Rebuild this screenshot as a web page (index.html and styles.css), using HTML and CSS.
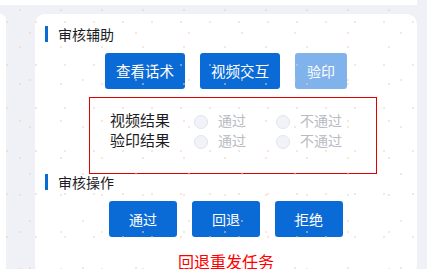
FILE: index.html
```html
<!DOCTYPE html>
<html lang="zh-CN">
<head>
<meta charset="utf-8">
<link rel="stylesheet" href="styles.css">
</head>
<body>
<div class="page">
  <div class="top-strip"></div>
  <div class="main-row">
    <div class="side-card"></div>
    <div class="card">
      <div class="section-title"><span class="bar"></span><span>审核辅助</span></div>
      <div class="btn-row first">
        <button class="btn wide">查看话术</button>
        <button class="btn wide">视频交互</button>
        <button class="btn light">验印</button>
      </div>
      <div class="result-box">
        <div class="result-row">
          <span class="label">视频结果</span>
          <span class="option"><span class="radio"></span>通过</span>
          <span class="option"><span class="radio"></span>不通过</span>
        </div>
        <div class="result-row">
          <span class="label">验印结果</span>
          <span class="option"><span class="radio"></span>通过</span>
          <span class="option"><span class="radio"></span>不通过</span>
        </div>
      </div>
      <div class="section-title second"><span class="bar"></span><span>审核操作</span></div>
      <div class="btn-row">
        <button class="btn narrow">通过</button>
        <button class="btn narrow">回退</button>
        <button class="btn narrow">拒绝</button>
      </div>
      <div class="notice">回退重发任务</div>
    </div>
  </div>
  <div class="dots"></div>
</div>
</body>
</html>
```

FILE: styles.css
```css
html, body {
  margin: 0;
  padding: 0;
}
body {
  width: 427px;
  height: 269px;
  overflow: hidden;
  background: #f0f1f6;
  font-family: "Noto Sans CJK SC", "Noto Sans", sans-serif;
}
.page {
  position: relative;
  width: 427px;
  height: 269px;
  overflow: hidden;
}
.top-strip {
  width: 417px;
  height: 5px;
  background: #ffffff;
}
.main-row {
  display: flex;
  margin-top: 9px;
}
.side-card {
  width: 6px;
  height: 260px;
  background: #ffffff;
  border-top-right-radius: 8px;
  border-bottom-right-radius: 8px;
}
.card {
  margin-left: 29px;
  width: 382px;
  height: 260px;
  background: #ffffff;
  border-radius: 10px;
  padding: 12px 0 0 10px;
  box-sizing: border-box;
  display: flex;
  flex-direction: column;
}
.card > * {
  flex-shrink: 0;
}
.section-title {
  display: flex;
  align-items: center;
  height: 16px;
  font-size: 14px;
  color: #1c1c24;
}
.section-title.second {
  margin-top: 0;
}
.bar {
  width: 3px;
  height: 16px;
  background: #0b6bd6;
  margin-right: 10px;
}
.btn-row {
  display: flex;
  justify-content: center;
  gap: 15px;
  margin-top: 11px;
  margin-left: -10px;
}
.btn {
  height: 36px;
  border: none;
  border-radius: 3px;
  background: #0b6bd6;
  color: #ffffff;
  font-family: "Noto Sans CJK SC", "Noto Sans", sans-serif;
  font-size: 14px;
  padding: 0;
  line-height: 36px;
}
.btn.wide { width: 80px; font-size: 14.5px; }
.btn.light { width: 52px; background: #80b2ec; }
.btn.narrow { width: 68px; }
.result-box {
  margin-top: 8px;
  margin-left: 44px;
  width: 288px;
  height: 77px;
  box-sizing: border-box;
  border: 1px solid #e00000;
  padding: 12px 0 0 20px;
}
.result-row {
  display: flex;
  align-items: center;
  height: 20px;
}
.label {
  width: 84px;
  font-size: 15px;
  color: #1c1c24;
  line-height: 20px;
}
.option {
  display: flex;
  align-items: center;
  width: 82px;
  font-size: 14px;
  color: #b9bac2;
  line-height: 20px;
}
.option .radio {
  width: 12px;
  height: 12px;
  border-radius: 50%;
  border: 1px solid #e2e4ee;
  background: #f2f3f8;
  margin-right: 10px;
  margin-top: 4px;
}
.notice {
  margin-top: 17px;
  margin-left: -10px;
  text-align: center;
  font-size: 16px;
  line-height: 14px;
  color: #ff0000;
}
.dots {
  position: absolute;
  inset: 0;
  pointer-events: none;
  opacity: 0.5;
  background-image:
    radial-gradient(circle at 20px 10px, #f7cdb0 0 1px, transparent 1.5px),
    radial-gradient(circle at 7px 22px, #f7cdb0 0 1px, transparent 1.5px),
    radial-gradient(circle at 30px 33px, #f7cdb0 0 1px, transparent 1.5px);
  background-size: 41px 37px, 29px 43px, 53px 47px;
  background-repeat: repeat;
}
```
